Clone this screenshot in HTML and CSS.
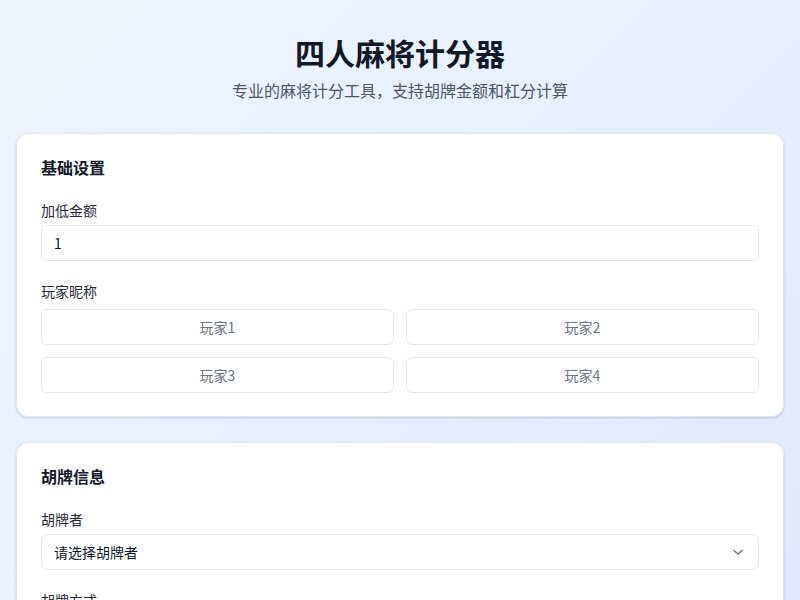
FILE: index.html
```html
<!DOCTYPE html>
<html lang="zh-CN">
<head>
<meta charset="utf-8">
<title>四人麻将计分器</title>
<link rel="stylesheet" href="styles.css">
</head>
<body>
<div class="page">
  <header class="header">
    <h1 class="title">四人麻将计分器</h1>
    <p class="subtitle">专业的麻将计分工具，支持胡牌金额和杠分计算</p>
  </header>

  <section class="card">
    <h2 class="card-title">基础设置</h2>
    <div class="field">
      <label class="label">加低金额</label>
      <input class="input" type="text" value="1">
    </div>
    <div class="field">
      <label class="label">玩家昵称</label>
      <div class="players">
        <input class="input center" type="text" placeholder="玩家1">
        <input class="input center" type="text" placeholder="玩家2">
        <input class="input center" type="text" placeholder="玩家3">
        <input class="input center" type="text" placeholder="玩家4">
      </div>
    </div>
  </section>

  <section class="card">
    <h2 class="card-title">胡牌信息</h2>
    <div class="field">
      <label class="label">胡牌者</label>
      <div class="select">
        <span class="select-text">请选择胡牌者</span>
        <svg class="chevron" width="12" height="12" viewBox="0 0 12 12"><path d="M2 4.5 L6 8 L10 4.5" fill="none" stroke="#6b7280" stroke-width="1.4" stroke-linecap="round" stroke-linejoin="round"/></svg>
      </div>
    </div>
    <div class="field">
      <label class="label">胡牌方式</label>
      <div class="select">
        <span class="select-text">自摸</span>
      </div>
    </div>
  </section>
</div>
</body>
</html>
```

FILE: styles.css
```css
* { box-sizing: border-box; }
html, body { margin: 0; padding: 0; }
body {
  font-family: "Noto Sans CJK SC", "Noto Sans", sans-serif;
  color: #111827;
  background: linear-gradient(135deg, #eff6ff 0%, #e0e7ff 100%);
  min-height: 100vh;
}
.page {
  padding: 16px;
}
.header {
  text-align: center;
  padding-top: 18px;
  margin-bottom: 31px;
}
.title {
  margin: 0;
  font-size: 30px;
  line-height: 36px;
  font-weight: 700;
  color: #111827;
}
.subtitle {
  margin: 8px 0 0;
  font-size: 16px;
  line-height: 24px;
  color: #4b5563;
}
.card {
  background: #fff;
  border: 1px solid #e5e7eb;
  border-radius: 12px;
  padding: 23px 24px 23px;
  box-shadow: 0 1px 3px rgba(15, 23, 42, 0.12), 0 1px 2px rgba(15, 23, 42, 0.06);
  margin-bottom: 25px;
}
.card-title {
  margin: 0 0 23px;
  font-size: 16px;
  line-height: 20px;
  font-weight: 700;
  color: #111827;
}
.field + .field { margin-top: 20px; }
.label {
  display: block;
  font-size: 14px;
  line-height: 20px;
  color: #1f2937;
  margin-bottom: 5px;
}
.input {
  display: block;
  width: 100%;
  height: 36px;
  border: 1px solid #e2e8f0;
  border-radius: 6px;
  padding: 0 12px;
  font-family: inherit;
  font-size: 14px;
  color: #0f172a;
  background: #fff;
  outline: none;
}
.input::placeholder { color: #64748b; }
.center { text-align: center; }
.players {
  display: grid;
  grid-template-columns: 1fr 1fr;
  gap: 12px;
  margin-top: 8px;
}
.select {
  display: flex;
  align-items: center;
  justify-content: space-between;
  height: 36px;
  border: 1px solid #e2e8f0;
  border-radius: 6px;
  padding: 0 14px 0 12px;
  font-size: 14px;
  color: #0f172a;
}
.chevron { display: block; }
```
